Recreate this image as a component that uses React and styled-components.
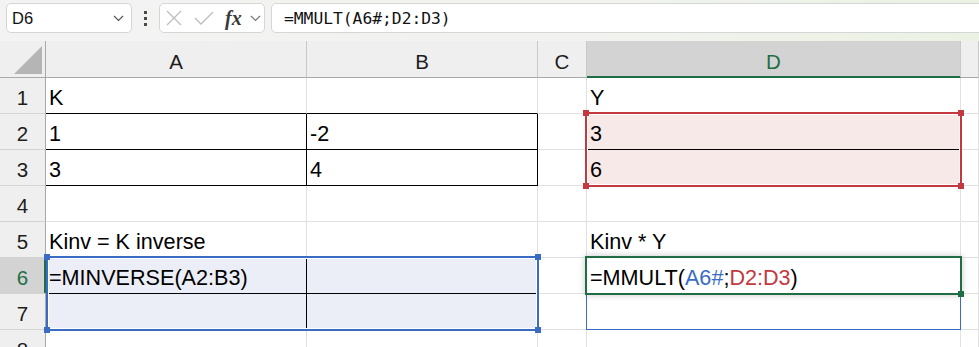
import React from 'react';
import styled, { createGlobalStyle } from 'styled-components';

const Global = createGlobalStyle`
  html, body { margin: 0; padding: 0; background: #fff; }
  body { font-family: "Liberation Sans", Arial, sans-serif; overflow: hidden; }
`;

const GREEN = '#1f6e43';
const BLUE = '#3a6cc5';
const RED = '#c3393f';
const GRID = '#e1e1e1';

const Page = styled.div`
  width: 979px;
  height: 347px;
  overflow: hidden;
  display: flex;
  flex-direction: column;
  background: #fff;
`;

const Toolbar = styled.div`
  height: 41px;
  flex: none;
  box-sizing: border-box;
  display: flex;
  align-items: flex-start;
  padding: 3px 0 0 6px;
  background: linear-gradient(90deg, #f3f3f3 0%, #f2f3f0 60%, #ebf1e3 100%);
`;

const NameBox = styled.div`
  width: 126px;
  height: 30px;
  box-sizing: border-box;
  border: 1px solid #d6d6d6;
  border-radius: 5px;
  background: #fff;
  display: flex;
  align-items: center;
  justify-content: space-between;
  padding: 0 7px 0 5px;
  font-size: 16.5px;
  color: #111;
`;

const Dots = styled.div`
  width: 27px;
  height: 30px;
  display: flex;
  flex-direction: column;
  align-items: center;
  justify-content: center;
  gap: 3px;
  span {
    width: 3px;
    height: 3px;
    background: #4a4a4a;
  }
`;

const FxBox = styled.div`
  width: 106px;
  height: 30px;
  box-sizing: border-box;
  border: 1px solid #d6d6d6;
  border-radius: 5px;
  background: #fff;
  display: flex;
  align-items: center;
  padding-left: 6px;
`;

const IconSlot = styled.span`
  display: inline-flex;
  align-items: center;
  margin-left: ${(p) => p.$ml || 0}px;
`;

const FxText = styled.span`
  font-family: "Liberation Serif", "Times New Roman", serif;
  font-style: italic;
  font-weight: bold;
  font-size: 20px;
  color: #3a3a3a;
  margin-left: 11px;
  width: 18px;
  line-height: 1;
`;

const FormulaInput = styled.div`
  flex: 1;
  margin-left: 6px;
  margin-right: -10px;
  height: 30px;
  box-sizing: border-box;
  border: 1px solid #d6d6d6;
  border-radius: 5px;
  background: #fff;
  display: flex;
  align-items: center;
  padding-left: 12px;
  font-family: "DejaVu Sans Mono", "Liberation Mono", monospace;
  font-size: 16.3px;
  color: #111;
`;

const Sheet = styled.div`
  flex: 1;
  display: grid;
  grid-template-columns: 46px 261px 231px 49px 374px 1fr;
  grid-template-rows: 37px repeat(8, 36px);
  overflow: hidden;
`;

const Corner = styled.div`
  grid-column: 1;
  grid-row: 1;
  background: #efefef;
  border-right: 1px solid #a9a9a9;
  border-bottom: 1px solid #a9a9a9;
  display: flex;
  align-items: flex-end;
  justify-content: flex-end;
  padding: 0 3px 3px 0;
`;

const ColHead = styled.div`
  grid-column: ${(p) => p.$c};
  grid-row: 1;
  background: ${(p) => (p.$sel ? '#d3d3d3' : '#efefef')};
  border-right: 1px solid #c9c9c9;
  border-bottom: 1px solid ${(p) => (p.$sel ? GREEN : '#a9a9a9')};
  box-shadow: ${(p) => (p.$sel ? `inset 0 -1px 0 ${GREEN}` : 'none')};
  color: ${(p) => (p.$sel ? GREEN : '#1d1d1d')};
  font-size: 20.5px;
  line-height: 20px;
  display: flex;
  align-items: flex-end;
  justify-content: center;
  padding-bottom: 5px;
  box-sizing: border-box;
  overflow: hidden;
`;

const RowHead = styled.div`
  grid-column: 1;
  grid-row: ${(p) => p.$r};
  background: ${(p) => (p.$sel ? '#d3d3d3' : '#efefef')};
  border-right: 1px solid ${(p) => (p.$sel ? GREEN : '#a9a9a9')};
  border-bottom: 1px solid #d3d3d3;
  box-shadow: ${(p) => (p.$sel ? `inset -1px 0 0 ${GREEN}` : 'none')};
  color: ${(p) => (p.$sel ? GREEN : '#1d1d1d')};
  font-size: 20.5px;
  line-height: 20px;
  display: flex;
  align-items: flex-end;
  justify-content: center;
  padding-bottom: 5px;
  box-sizing: border-box;
`;

const Cell = styled.div`
  grid-column: ${(p) => p.$c};
  grid-row: ${(p) => p.$r};
  background: ${(p) => p.$bg || '#fff'};
  border-right: 1px solid ${(p) => (p.$br ? '#000' : GRID)};
  border-bottom: 1px solid ${(p) => (p.$bb ? '#000' : GRID)};
  font-size: 21.6px;
  line-height: 21px;
  color: #000;
  display: flex;
  align-items: flex-end;
  padding: 0 0 5px 3px;
  box-sizing: border-box;
  white-space: nowrap;
  overflow: visible;
  min-width: 0;
`;

const Ref = styled.span`
  color: ${(p) => p.$c};
`;

const Range = styled.div`
  grid-column: ${(p) => p.$col};
  grid-row: ${(p) => p.$row};
  margin: ${(p) => p.$m};
  position: relative;
  z-index: ${(p) => p.$z || 2};
  border: ${(p) => p.$w}px solid ${(p) => p.$c};
  box-shadow: ${(p) => p.$shadow || 'none'};
  pointer-events: none;
`;

const Handle = styled.span`
  position: absolute;
  width: 6px;
  height: 6px;
  background: ${(p) => p.$c};
  ${(p) => (p.$t ? 'top: -4px;' : 'bottom: -4px;')}
  ${(p) => (p.$l ? 'left: -4px;' : 'right: -4px;')}
`;

const FillHandle = styled.span`
  position: absolute;
  width: 6px;
  height: 6px;
  right: -4px;
  bottom: -4px;
  background: ${GREEN};
`;

const Chevron = ({ w = 11, color = '#555' }) => (
  <svg width={w} height="7" viewBox="0 0 11 7">
    <polyline points="1,1 5.5,5.5 10,1" fill="none" stroke={color} strokeWidth="1.2" />
  </svg>
);

const cols = ['A', 'B', 'C', 'D', 'E'];
const rowNums = [1, 2, 3, 4, 5, 6, 7, 8];

const PINK = '#f8e9e9';
const LBLUE = '#ebeef7';

const formula = (
  <>
    =MMULT(<Ref $c={BLUE}>A6#</Ref>;<Ref $c={RED}>D2:D3</Ref>)
  </>
);

const content = {
  A1: 'K',
  D1: 'Y',
  A2: '1',
  B2: '-2',
  D2: '3',
  A3: '3',
  B3: '4',
  D3: '6',
  A5: 'Kinv = K inverse',
  D5: 'Kinv * Y',
  A6: '=MINVERSE(A2:B3)',
  D6: formula,
};
const fills = { D2: PINK, D3: PINK, A6: LBLUE, B6: LBLUE, A7: LBLUE, B7: LBLUE };
const blackRight = new Set(['A2', 'B2', 'A3', 'B3', 'A6', 'A7']);
const blackBottom = new Set(['A1', 'B1', 'A2', 'B2', 'A3', 'B3', 'D2', 'A6', 'B6']);

export default function App() {
  return (
    <Page>
      <Global />
      <Toolbar>
        <NameBox>
          <span>D6</span>
          <Chevron />
        </NameBox>
        <Dots>
          <span />
          <span />
          <span />
        </Dots>
        <FxBox>
          <IconSlot>
            <svg width="16" height="16" viewBox="0 0 16 16">
              <path d="M1 1 L15 15 M15 1 L1 15" stroke="#bdbdbd" strokeWidth="1.3" fill="none" />
            </svg>
          </IconSlot>
          <IconSlot $ml={12}>
            <svg width="20" height="14" viewBox="0 0 20 14">
              <polyline points="1,7 7,13 19,1" stroke="#bdbdbd" strokeWidth="1.3" fill="none" />
            </svg>
          </IconSlot>
          <FxText>fx</FxText>
          <IconSlot $ml={7}>
            <Chevron w={11} color="#777" />
          </IconSlot>
        </FxBox>
        <FormulaInput>=MMULT(A6#;D2:D3)</FormulaInput>
      </Toolbar>
      <Sheet>
        <Corner>
          <svg width="28" height="28" viewBox="0 0 28 28">
            <polygon points="0,28 28,28 28,0" fill="#b5b5b5" />
          </svg>
        </Corner>
        {cols.map((c, ci) => (
          <ColHead key={c} $c={ci + 2} $sel={c === 'D'}>
            {c === 'E' ? '' : c}
          </ColHead>
        ))}
        {rowNums.map((r) => (
          <React.Fragment key={r}>
            <RowHead $r={r + 1} $sel={r === 6}>
              {r}
            </RowHead>
            {cols.map((c, ci) => {
              const id = c + r;
              return (
                <Cell
                  key={id}
                  $c={ci + 2}
                  $r={r + 1}
                  $bg={fills[id]}
                  $br={blackRight.has(id)}
                  $bb={blackBottom.has(id)}
                >
                  {content[id]}
                </Cell>
              );
            })}
          </React.Fragment>
        ))}
        <Range $col="5" $row="3 / 5" $m="-2px -1px -1px -2px" $w={2} $c={RED} $shadow="inset 0 0 0 1px #fff">
          <Handle $c={RED} $t $l />
          <Handle $c={RED} $t />
          <Handle $c={RED} $l />
          <Handle $c={RED} />
        </Range>
        <Range $col="2 / 4" $row="7 / 9" $m="-2px -1px -1px 0" $w={2} $c={BLUE} $shadow="inset 0 0 0 1px #fff">
          <Handle $c={BLUE} $t $l />
          <Handle $c={BLUE} $t />
          <Handle $c={BLUE} $l />
          <Handle $c={BLUE} />
        </Range>
        <Range $col="5" $row="7 / 9" $m="-1px 0 0 -1px" $w={1} $c={BLUE} $z={2} />
        <Range
          $col="5"
          $row="7"
          $m="-2px -1px -1px -2px"
          $w={2}
          $c={GREEN}
          $z={3}
          $shadow="0 0 7px rgba(0,0,0,0.22)"
        >
          <FillHandle />
        </Range>
      </Sheet>
    </Page>
  );
}
